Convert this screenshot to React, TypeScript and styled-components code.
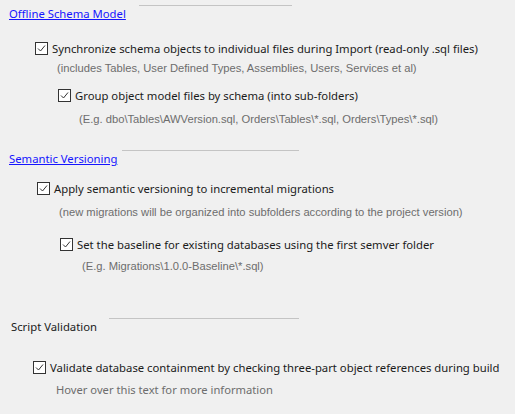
import React from "react";
import styled, { createGlobalStyle } from "styled-components";

const GlobalStyle = createGlobalStyle`
  html, body {
    margin: 0;
    padding: 0;
    background: #f0f0f0;
  }
  body {
    font-family: "Noto Sans", "Open Sans", sans-serif;
    color: #1b1b1b;
  }
`;

const Page = styled.div`
  width: 515px;
  height: 414px;
  overflow: hidden;
  padding-top: 4px;
  box-sizing: border-box;
`;

const Section = styled.section<{ $gap: number }>`
  margin-top: ${(p) => p.$gap}px;
`;

const Header = styled.div<{ $left: number }>`
  display: flex;
  align-items: flex-start;
  padding-left: ${(p) => p.$left}px;
  height: 20px;
`;

const HeaderLink = styled.a`
  font-size: 11.3px;
  line-height: 20px;
  color: #1515ff;
  text-decoration: underline;
  cursor: pointer;
`;

const HeaderLabel = styled.span`
  font-size: 11.3px;
  line-height: 20px;
  color: #1b1b1b;
`;

const Rule = styled.div<{ $gap: number; $width: number }>`
  flex: none;
  margin-left: ${(p) => p.$gap}px;
  width: ${(p) => p.$width}px;
  margin-top: 1px;
  border-top: 1px solid #c4c4c4;
`;

const Row = styled.label<{ $indent: number; $gap: number }>`
  display: flex;
  align-items: center;
  gap: 4px;
  padding-left: ${(p) => p.$indent}px;
  margin-top: ${(p) => p.$gap}px;
  height: 16px;
  font-size: 11.3px;
  color: #1b1b1b;
  white-space: nowrap;
`;

const Hint = styled.div<{ $indent: number; $gap: number; $segoe?: boolean }>`
  padding-left: ${(p) => p.$indent}px;
  margin-top: ${(p) => p.$gap}px;
  height: 14px;
  line-height: 14px;
  font-family: ${(p) =>
    p.$segoe ? `"Noto Sans", sans-serif` : `"Liberation Sans", Arial, sans-serif`};
  font-size: 11.2px;
  color: #6d6d6d;
  white-space: nowrap;
`;

const Box = styled.svg`
  flex: none;
  width: 13px;
  height: 13px;
`;

const Check = () => (
  <Box viewBox="0 0 13 13">
    <rect x="0.5" y="0.5" width="12" height="12" fill="#ffffff" stroke="#333333" />
    <polyline points="3,6.5 5.5,9 10,3.5" fill="none" stroke="#333333" strokeWidth="1" />
  </Box>
);

export default function App() {
  return (
    <>
      <GlobalStyle />
      <Page>
        <Section $gap={0}>
          <Header $left={9}>
            <HeaderLink>Offline Schema Model</HeaderLink>
            <Rule $gap={13} $width={153} />
          </Header>
          <Row $indent={35} $gap={16}>
            <Check />
            Synchronize schema objects to individual files during Import (read-only .sql files)
          </Row>
          <Hint $indent={57} $gap={5}>
            (includes Tables, User Defined Types, Assemblies, Users, Services et al)
          </Hint>
          <Row $indent={58} $gap={12}>
            <Check />
            Group object model files by schema (into sub-folders)
          </Row>
          <Hint $indent={79} $gap={9}>
            (E.g. dbo\Tables\AWVersion.sql, Orders\Tables\*.sql, Orders\Types\*.sql)
          </Hint>
        </Section>

        <Section $gap={23}>
          <Header $left={9}>
            <HeaderLink>Semantic Versioning</HeaderLink>
            <Rule $gap={5} $width={177} />
          </Header>
          <Row $indent={37} $gap={11}>
            <Check />
            Apply semantic versioning to incremental migrations
          </Row>
          <Hint $indent={59} $gap={9}>
            (new migrations will be organized into subfolders according to the project version)
          </Hint>
          <Row $indent={60} $gap={17}>
            <Check />
            Set the baseline for existing databases using the first semver folder
          </Row>
          <Hint $indent={82} $gap={7}>
            (E.g. Migrations\1.0.0-Baseline\*.sql)
          </Hint>
        </Section>

        <Section $gap={44}>
          <Header $left={11}>
            <HeaderLabel>Script Validation</HeaderLabel>
            <Rule $gap={12} $width={190} />
          </Header>
          <Row $indent={33} $gap={22}>
            <Check />
            Validate database containment by checking three-part object references during build
          </Row>
          <Hint $indent={56} $gap={8} $segoe>
            Hover over this text for more information
          </Hint>
        </Section>
      </Page>
    </>
  );
}
